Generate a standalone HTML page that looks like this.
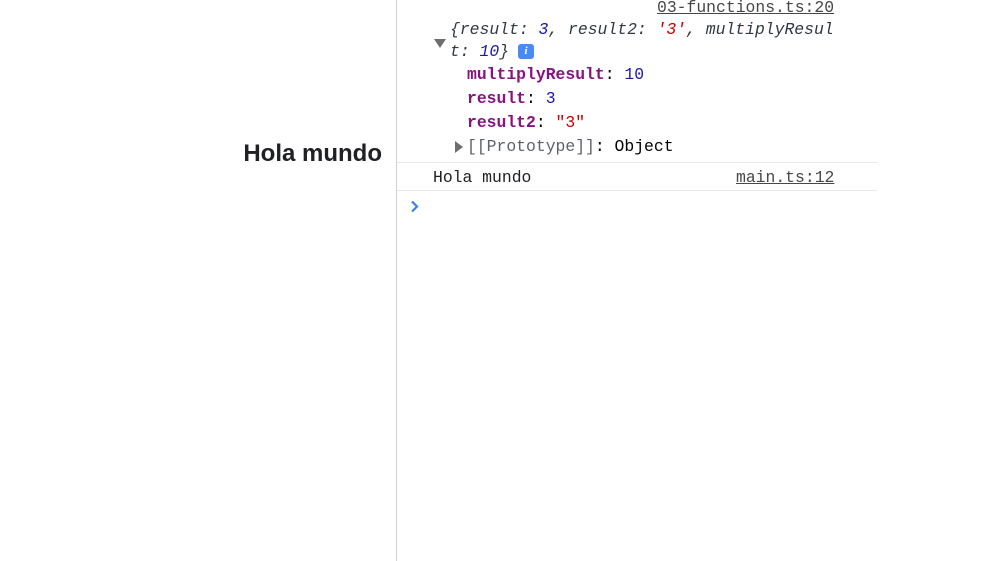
<!DOCTYPE html>
<html><head><style>
body{margin:0;width:999px;height:561px;background:#fff;position:relative;overflow:hidden;font-family:"Liberation Mono",monospace;font-size:16.4px}
.a{position:absolute;white-space:pre;line-height:24px}
h1{position:absolute;margin:0;right:617px;top:140px;font:bold 24px "Liberation Sans",sans-serif;color:#202124}
.k{color:#881280;font-weight:bold}.n{color:#1a1aa6}.s{color:#c80000}.g{color:#5f6368}
.it{font-style:italic;color:#303942}
a{color:#474747;text-decoration:underline}
</style></head><body>
<h1>Hola mundo</h1>
<div style="position:absolute;left:396px;top:0;width:1px;height:561px;background:#d0d0d0"></div>
<div style="position:absolute;left:397px;top:162px;width:480px;height:1px;background:#e8e8e8"></div>
<div style="position:absolute;left:397px;top:190px;width:480px;height:1px;background:#e8e8e8"></div>
<div class="a" style="left:657px;top:-4px"><a>03-functions.ts:20</a></div>
<div class="a it" style="left:450px;top:18px">{result: <span class="n">3</span>, result2: <span class="s">'3'</span>, multiplyResul</div>
<div class="a it" style="left:450px;top:40px">t: <span class="n">10</span>}</div>
<div style="position:absolute;left:518px;top:44px;width:16px;height:15px;background:#4a8af4;border-radius:3px;color:#fff;font:bold italic 11px 'Liberation Serif',serif;text-align:center;line-height:15px">i</div>
<div style="position:absolute;left:434px;top:39px;width:0;height:0;border-left:6px solid transparent;border-right:6px solid transparent;border-top:9px solid #6e6e6e"></div>
<div class="a" style="left:467px;top:63px"><span class="k">multiplyResult</span>: <span class="n">10</span></div>
<div class="a" style="left:467px;top:87px"><span class="k">result</span>: <span class="n">3</span></div>
<div class="a" style="left:467px;top:111px"><span class="k">result2</span>: <span class="s">"3"</span></div>
<div style="position:absolute;left:455px;top:141px;width:0;height:0;border-top:6px solid transparent;border-bottom:6px solid transparent;border-left:8px solid #6e6e6e"></div>
<div class="a" style="left:467px;top:135px"><span class="g">[[Prototype]]</span>: Object</div>
<div class="a" style="left:433px;top:166px;color:#202124">Hola mundo</div>
<div class="a" style="left:736px;top:166px"><a>main.ts:12</a></div>
<svg style="position:absolute;left:410px;top:200px" width="10" height="14"><path d="M2 1.5 L7 6.5 L2 11.5" stroke="#3b7de9" stroke-width="2.2" fill="none"/></svg>
</body></html>
